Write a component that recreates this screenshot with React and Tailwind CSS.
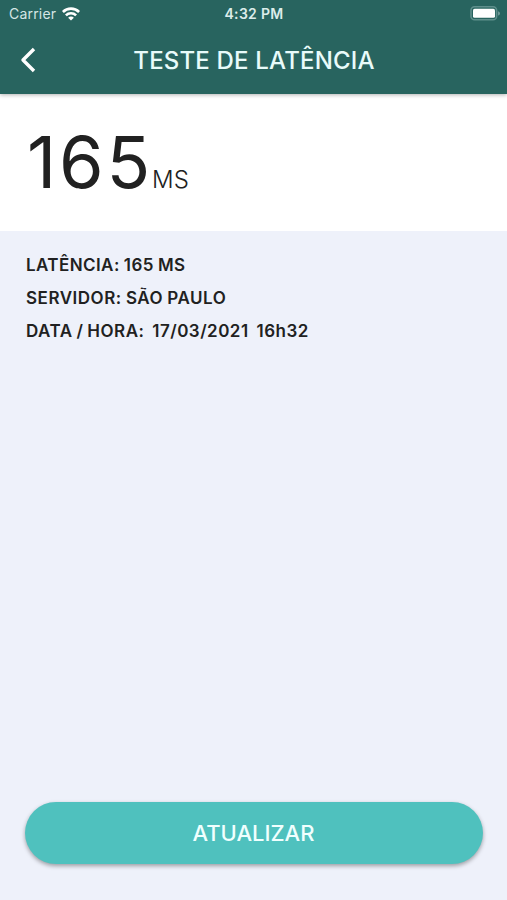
import { useState } from 'react';

const WifiIcon = () => (
  <svg width="18" height="14" viewBox="0 0 18 14" fill="none" stroke="#fff" strokeWidth="2.6">
    <path d="M0.9 5C5.4 0.5 12.6 0.5 17.1 5" />
    <path d="M3.9 8.3C6.7 5.5 11.3 5.5 14.1 8.3" />
    <path d="M9 13.6L6.1 10.7C7.7 9.2 10.3 9.2 11.9 10.7Z" fill="#fff" stroke="none" />
  </svg>
);

const BatteryIcon = () => (
  <svg width="31" height="15" viewBox="0 0 31 15">
    <rect x="1" y="0.8" width="25.6" height="13" rx="3.6" fill="none" stroke="#5f8f8c" strokeWidth="1.6" />
    <rect x="3" y="2.8" width="22" height="9" rx="1.6" fill="#fff" />
    <path d="M28.2 5.2C30.4 6 30.4 8.8 28.2 9.6Z" fill="#7fa5a3" />
  </svg>
);

const BackIcon = () => (
  <svg width="16" height="26" viewBox="0 0 16 26" fill="none" stroke="#fff" strokeWidth="3.4" strokeLinejoin="round">
    <path d="M14 2L3 13L14 24" />
  </svg>
);

export default function App() {
  const [result] = useState({
    latency: 165,
    server: 'SÃO PAULO',
    date: '17/03/2021',
    time: '16h32',
  });

  return (
    <div className="flex h-[900px] w-[507px] flex-col overflow-hidden bg-[#eef1fa] font-['Inter',sans-serif] text-[#212121]">
      <header className="z-10 h-[94px] shrink-0 bg-[#28645f] text-white shadow-[0_1px_4px_rgba(0,0,0,0.3)]">
        {/* Status bar */}
        <div className="grid h-[27px] grid-cols-3 items-center pr-[6px] pl-[9px]">
          <div className="flex items-center gap-[6px] text-[14px] text-[#d5e6e5]">
            <span className="tracking-[0.2px]">Carrier</span>
            <WifiIcon />
          </div>
          <span className="pr-[2px] text-center text-[14px] font-semibold tracking-[0.3px] text-[#dcecea]">4:32 PM</span>
          <div className="flex justify-end">
            <BatteryIcon />
          </div>
        </div>

        {/* Title bar */}
        <div className="grid h-[66px] grid-cols-[60px_1fr_60px] items-center">
          <button className="pl-5" aria-label="Voltar">
            <BackIcon />
          </button>
          <h1 className="pt-px pl-px text-center text-[24px] font-medium tracking-[0.18px] text-[#e8fbfa]">TESTE DE LATÊNCIA</h1>
        </div>
      </header>

      <section className="flex h-[137px] shrink-0 items-baseline bg-white pt-[24px] pl-[27px]">
        <span className="text-[72px] leading-[88px] tracking-[2.8px]">{result.latency}</span>
        <span className="-ml-px text-[24px] font-light">MS</span>
      </section>

      <section className="flex flex-col pt-[18px] pl-[26px] text-[17px] leading-[33px] font-semibold tracking-[0.42px] [word-spacing:-0.6px] whitespace-pre">
        <p>LATÊNCIA: {result.latency} MS</p>
        <p className="tracking-[0.52px]">SERVIDOR: {result.server}</p>
        <p className="tracking-[0.48px] [word-spacing:-0.8px]">{`DATA / HORA:  ${result.date}  ${result.time}`}</p>
      </section>

      <button className="mt-auto mr-[24px] mb-[36px] ml-[25px] h-[62px] rounded-full bg-[#4fc1be] pr-px text-[22px] font-medium text-[#f0fffe] shadow-[0_2px_4px_rgba(0,0,0,0.35)]">
        ATUALIZAR
      </button>
    </div>
  );
}
